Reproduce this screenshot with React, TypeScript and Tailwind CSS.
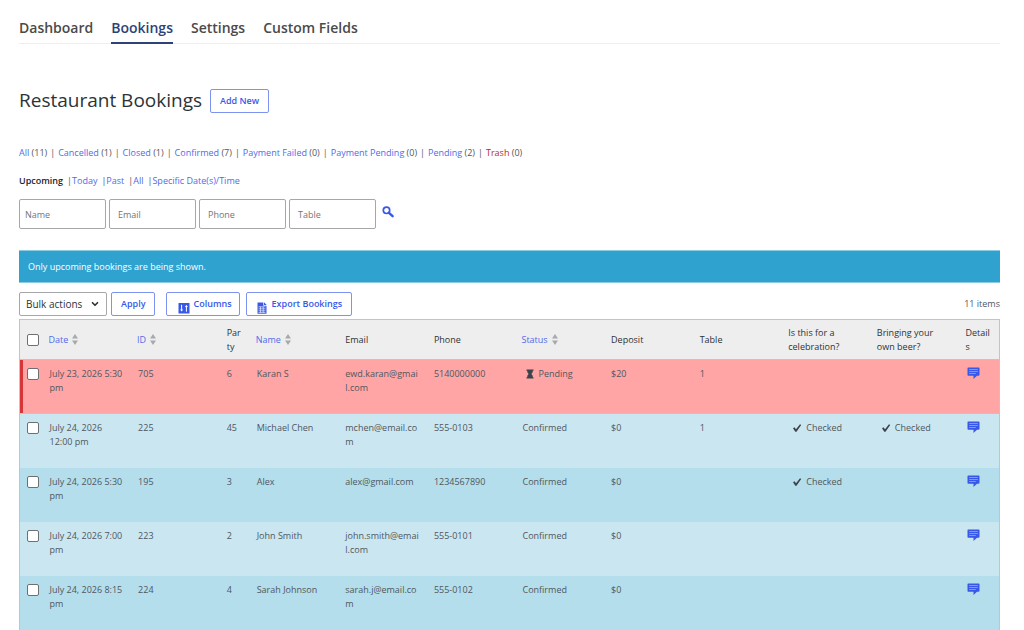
import React from "react";
import clsx from "clsx";
import { ChevronDown } from "lucide-react";

type Booking = {
  id: number;
  date: string;
  party: number;
  name: string;
  email: string;
  phone: string;
  status: "Pending" | "Confirmed";
  deposit: string;
  table?: string;
  celebration?: boolean;
  beer?: boolean;
};

const tabs = ["Dashboard", "Bookings", "Settings", "Custom Fields"];

const statuses = [
  { label: "All", count: 11 },
  { label: "Cancelled", count: 1 },
  { label: "Closed", count: 1 },
  { label: "Confirmed", count: 7 },
  { label: "Payment Failed", count: 0 },
  { label: "Payment Pending", count: 0 },
  { label: "Pending", count: 2 },
  { label: "Trash", count: 0 },
];

const ranges = ["Today", "Past", "All", "Specific Date(s)/Time"];

const filters = ["Name", "Email", "Phone", "Table"];

const columns = [
  { label: "Date", sortable: true },
  { label: "ID", sortable: true },
  { label: "Party", width: "w-[30px]" },
  { label: "Name", sortable: true },
  { label: "Email" },
  { label: "Phone" },
  { label: "Status", sortable: true },
  { label: "Deposit" },
  { label: "Table" },
  { label: "Is this for a celebration?" },
  { label: "Bringing your own beer?" },
  { label: "Details", width: "w-[42px]" },
];

const bookings: Booking[] = [
  {
    id: 705,
    date: "July 23, 2026 5:30 pm",
    party: 6,
    name: "Karan S",
    email: "ewd.karan@gmail.com",
    phone: "5140000000",
    status: "Pending",
    deposit: "$20",
    table: "1",
  },
  {
    id: 225,
    date: "July 24, 2026 12:00 pm",
    party: 45,
    name: "Michael Chen",
    email: "mchen@email.com",
    phone: "555-0103",
    status: "Confirmed",
    deposit: "$0",
    table: "1",
    celebration: true,
    beer: true,
  },
  {
    id: 195,
    date: "July 24, 2026 5:30 pm",
    party: 3,
    name: "Alex",
    email: "alex@gmail.com",
    phone: "1234567890",
    status: "Confirmed",
    deposit: "$0",
    celebration: true,
  },
  {
    id: 223,
    date: "July 24, 2026 7:00 pm",
    party: 2,
    name: "John Smith",
    email: "john.smith@email.com",
    phone: "555-0101",
    status: "Confirmed",
    deposit: "$0",
  },
  {
    id: 224,
    date: "July 24, 2026 8:15 pm",
    party: 4,
    name: "Sarah Johnson",
    email: "sarah.j@email.com",
    phone: "555-0102",
    status: "Confirmed",
    deposit: "$0",
  },
];

const SearchIcon = () => (
  <svg viewBox="0 0 12 12" className="h-3 w-3" fill="none" stroke="currentColor">
    <circle cx="4.5" cy="4.3" r="3.2" strokeWidth="1.7" />
    <path d="M7 6.8l3.6 3.4" strokeWidth="2.4" strokeLinecap="round" />
  </svg>
);

const ColumnsIcon = () => (
  <svg viewBox="0 0 12 12" className="h-3 w-3">
    <path d="M.5 1h11v10.5H.5z" fill="currentColor" />
    <path d="M3.6 2.8v6M8.4 9.7v-6" fill="none" stroke="#fff" strokeWidth="1" />
    <path d="M2.1 7.4h3L3.6 9.6zM6.9 5.1h3L8.4 2.9z" fill="#fff" />
  </svg>
);

const SpreadsheetIcon = () => (
  <svg viewBox="0 0 12 12" className="h-3 w-3">
    <path d="M1.5.5h5.8v3.2h3.2v8h-9z" fill="currentColor" />
    <path d="M8 .3l2.7 2.8H8z" fill="currentColor" />
    <path
      d="M2.5 4.8h7M2.5 6.8h7M2.5 8.8h7M2.5 10.6h7M4.5 4.5v6.2M7.2 4.5v6.2"
      stroke="#fff"
      strokeWidth=".6"
    />
  </svg>
);

const HourglassIcon = () => (
  <svg viewBox="0 0 8 10" className="h-[10px] w-2" fill="currentColor">
    <path d="M.5.5h7v1.3h-.7c0 1.6-.6 2.4-1.5 3.2.9.8 1.5 1.6 1.5 3.2h.7v1.3h-7V8.2h.7c0-1.6.6-2.4 1.5-3.2C1.8 4.2 1.2 3.4 1.2 1.8H.5z" />
  </svg>
);

const CheckIcon = () => (
  <svg viewBox="0 0 10 10" className="h-[10px] w-[10px]" fill="currentColor">
    <path d="M8 1.2l1.2.8L4.5 8.8H3.3L1 5.2l1.5-1 1.5 2z" />
  </svg>
);

const CommentIcon = () => (
  <svg viewBox="0 0 13 12" className="h-3 w-[13px]">
    <path
      d="M1.3.5h10.4q.8 0 .8.8v6.4q0 1-1 1H10l-3.500 3.200V8.700H1.300q-.8 0-.8-.8V1.300q0-.8.8-.8z"
      fill="#3858e9"
    />
    <path d="M2.200 2.500h8.600M2.200 4.500h8.600M2.200 6.500h6.600" stroke="#b4c4f8" strokeWidth=".6" />
  </svg>
);

const SortIcon = () => (
  <svg viewBox="0 0 6 11" className="h-[11px] w-[6px] shrink-0" fill="#a7aaad">
    <path d="M3 0l3 4.500H0zM3 11L0 6.500h6z" />
  </svg>
);

const Checked = () => (
  <span className="flex items-center gap-1 pl-1 [&>svg]:text-[#3c434a]">
    <CheckIcon />
    Checked
  </span>
);

const buttonClass =
  "h-6 rounded-xs border border-[#7e93f0] bg-white font-semibold text-[#3858e9]";

const checkboxClass =
  "block h-3 w-3 appearance-none rounded-xs border border-[#6c7075] bg-white checked:bg-[#3858e9]";

const BookingRow = ({ booking, striped }: { booking: Booking; striped: boolean }) => {
  const pending = booking.status === "Pending";

  return (
    <tr
      className={clsx(
        "h-[54px] align-top",
        pending ? "border-b border-[#c3c4c7] bg-[#ffa5a5]" : striped ? "bg-[#b4deeb]" : "bg-[#cae6f1]"
      )}
    >
      <td className={clsx("pt-2 pl-[7px]", pending && "shadow-[inset_3px_0_#d63638]")}>
        <input type="checkbox" aria-label={`Select booking ${booking.id}`} className={checkboxClass} />
      </td>
      <td className="pt-[7px] pr-1 pl-2">{booking.date}</td>
      <td className="px-2 pt-[7px]">{booking.id}</td>
      <td className="px-2 pt-[7px]">{booking.party}</td>
      <td className="px-2 pt-[7px]">{booking.name}</td>
      <td className="pt-[7px] pr-[6px] pl-2 break-all">{booking.email}</td>
      <td className="px-2 pt-[7px]">{booking.phone}</td>
      <td className="px-2 pt-[7px]">
        {pending ? (
          <span className="flex items-center gap-1 pl-1 [&>svg]:text-[#3c434a]">
            <HourglassIcon />
            {booking.status}
          </span>
        ) : (
          booking.status
        )}
      </td>
      <td className="px-2 pt-[7px]">{booking.deposit}</td>
      <td className="px-2 pt-[7px]">{booking.table}</td>
      <td className="px-2 pt-[7px]">{booking.celebration && <Checked />}</td>
      <td className="px-2 pt-[7px]">{booking.beer && <Checked />}</td>
      <td className="px-[9px] pt-[7px]">
        <button type="button" aria-label={`Details of booking ${booking.id}`} className="block">
          <CommentIcon />
        </button>
      </td>
    </tr>
  );
};

const App = () => {
  return (
    <main className="bg-white pr-6 pl-[19px] pt-[18px] font-['Open_Sans',sans-serif] text-[9px] leading-[14px] text-[#50575e]">
      <nav className="flex gap-[18px] border-b border-[#eeeeee] text-sm font-semibold text-[#4a4a4a]">
        {tabs.map((tab) => (
          <a
            key={tab}
            href="#"
            className={clsx(
              "-mb-px pb-1 leading-5",
              tab === "Bookings" && "border-b-2 border-[#2c4278] text-[#2c4278]"
            )}
          >
            {tab}
          </a>
        ))}
      </nav>

      <div className="mt-[45px] flex items-center gap-2">
        <h1 className="pb-[2px] text-[19px] leading-[22px] text-[#2c3338]">Restaurant Bookings</h1>
        <button type="button" className={clsx(buttonClass, "px-[9px]")}>
          Add New
        </button>
      </div>

      <ul className="mt-[33px] flex">
        {statuses.map(({ label, count }, i) => (
          <li key={label}>
            {i > 0 && <span className="mx-[3px]">|</span>}
            <a href="#" className={label === "Trash" ? "text-[#b32d2e]" : "text-[#4f6bea]"}>
              {label}
            </a>{" "}
            ({count})
          </li>
        ))}
      </ul>

      <ul className="mt-[14px] flex gap-1">
        <li className="font-semibold text-[#1d2327]">Upcoming</li>
        {ranges.map((range) => (
          <li key={range}>
            |
            <a href="#" className="text-[#4f6bea]">
              {range}
            </a>
          </li>
        ))}
      </ul>

      <form className="mt-[11px] flex gap-[3px]" onSubmit={(e) => e.preventDefault()}>
        {filters.map((filter) => (
          <input
            key={filter}
            type="text"
            aria-label={filter}
            placeholder={filter}
            className="h-[30px] w-[87px] rounded-xs border border-[#a5a7aa] px-2 first:px-[5px] placeholder:text-[#757575]"
          />
        ))}
        <button type="submit" aria-label="Search" className="mt-[7px] ml-[3px] self-start text-[#3858e9]">
          <SearchIcon />
        </button>
      </form>

      <p className="mt-[21px] border-y border-[#8dcbe2] bg-[#30a2cf] px-[9px] pt-[9px] pb-2 text-white">
        Only upcoming bookings are being shown.
      </p>

      <div className="mt-[9px] flex items-center">
        <div className="relative">
          <select
            aria-label="Bulk actions"
            className="h-6 w-[88px] appearance-none rounded-xs border border-[#a5a7aa] bg-white px-[6px] text-[10px] text-[#2c3338]"
          >
            <option>Bulk actions</option>
          </select>
          <ChevronDown
            className="pointer-events-none absolute top-[7px] right-[7px] h-[10px] w-[10px] text-[#2c3338]"
            strokeWidth={4}
          />
        </div>
        <button type="button" className={clsx(buttonClass, "ml-1 px-[9px]")}>
          Apply
        </button>
        <button
          type="button"
          className={clsx(buttonClass, "ml-[11px] flex items-center gap-[3px] pr-[7px] pl-[11px]")}
        >
          <span className="mt-[7px]">
            <ColumnsIcon />
          </span>
          Columns
        </button>
        <button
          type="button"
          className={clsx(buttonClass, "ml-[6px] flex items-center gap-1 px-[9px]")}
        >
          <span className="mt-[7px]">
            <SpreadsheetIcon />
          </span>
          Export Bookings
        </button>
        <span className="ml-auto">11 items</span>
      </div>

      <table className="mt-[3px] w-full table-fixed border-collapse border border-b-0 border-[#c3c4c7]">
        <thead>
          <tr className="h-10 border-b border-[#c3c4c7] bg-[#eeeeee] text-left text-[#2c3338]">
            <th className="w-[22px] pl-[7px]">
              <input type="checkbox" aria-label="Select all" className={checkboxClass} />
            </th>
            {columns.map(({ label, sortable, width }) => (
              <th
                key={label}
                scope="col"
                className={clsx(
                  "font-normal",
                  sortable ? "px-[7px]" : "pr-[6px] pl-2",
                  width,
                  width && "break-all"
                )}
              >
                {sortable ? (
                  <a href="#" className="flex items-center gap-1 text-[#4f6bea]">
                    {label}
                    <SortIcon />
                  </a>
                ) : (
                  label
                )}
              </th>
            ))}
          </tr>
        </thead>
        <tbody>
          {bookings.map((booking, i) => (
            <BookingRow key={booking.id} booking={booking} striped={i % 2 === 0} />
          ))}
        </tbody>
      </table>
    </main>
  );
};

export default App;
